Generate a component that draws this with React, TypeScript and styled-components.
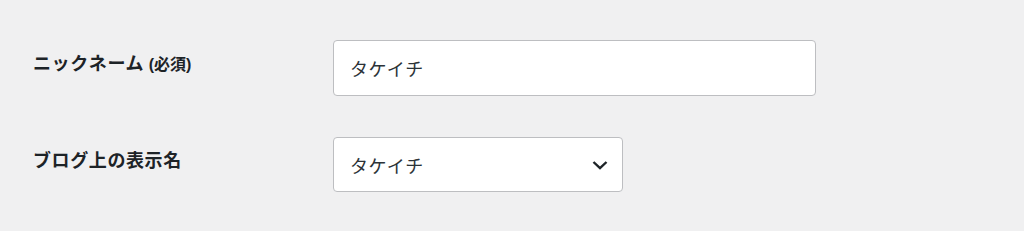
import React from 'react';
import styled, { createGlobalStyle } from 'styled-components';

const GlobalStyle = createGlobalStyle`
  html, body {
    margin: 0;
    padding: 0;
    background: #f0f0f1;
  }
  body {
    font-family: "Noto Sans CJK JP", "Noto Sans", sans-serif;
    color: #1d2327;
  }
`;

const Form = styled.div`
  display: flex;
  flex-direction: column;
  gap: 41px;
  padding: 40px 0 0 33px;
`;

const Row = styled.div`
  display: grid;
  grid-template-columns: 300px 1fr;
  align-items: start;
`;

const Label = styled.label`
  font-size: 18px;
  font-weight: 700;
  line-height: 24px;
  padding-top: 10px;
  letter-spacing: 0.6px;

  small {
    font-family: "Liberation Sans", "Noto Sans CJK JP", sans-serif;
    font-size: 16px;
    letter-spacing: 0;
  }
`;

const TextInput = styled.input`
  width: 483px;
  height: 56px;
  box-sizing: border-box;
  border: 1px solid #bdbec1;
  border-radius: 4px;
  background: #fff;
  padding: 0 16px;
  font-family: inherit;
  font-size: 18px;
  color: #2c3338;
  letter-spacing: 0.5px;
  outline: none;
`;

const SelectBox = styled.div`
  width: 290px;
  height: 55px;
  box-sizing: border-box;
  border: 1px solid #bdbec1;
  border-radius: 4px;
  background: #fff;
  display: flex;
  align-items: center;
  justify-content: space-between;
  padding: 0 14px 0 16px;
  font-size: 18px;
  color: #2c3338;
  letter-spacing: 0.5px;
`;

const Chevron = () => (
  <svg width="16" height="16" viewBox="0 0 16 16" aria-hidden="true">
    <path d="M1.5 5 L8 11.2 L14.5 5" fill="none" stroke="#1d2327" strokeWidth="2.4" />
  </svg>
);

const App = () => (
  <>
    <GlobalStyle />
    <Form>
      <Row>
        <Label>
          ニックネーム <small>(必須)</small>
        </Label>
        <TextInput defaultValue="タケイチ" />
      </Row>
      <Row>
        <Label>ブログ上の表示名</Label>
        <SelectBox>
          <span>タケイチ</span>
          <Chevron />
        </SelectBox>
      </Row>
    </Form>
  </>
);

export default App;
